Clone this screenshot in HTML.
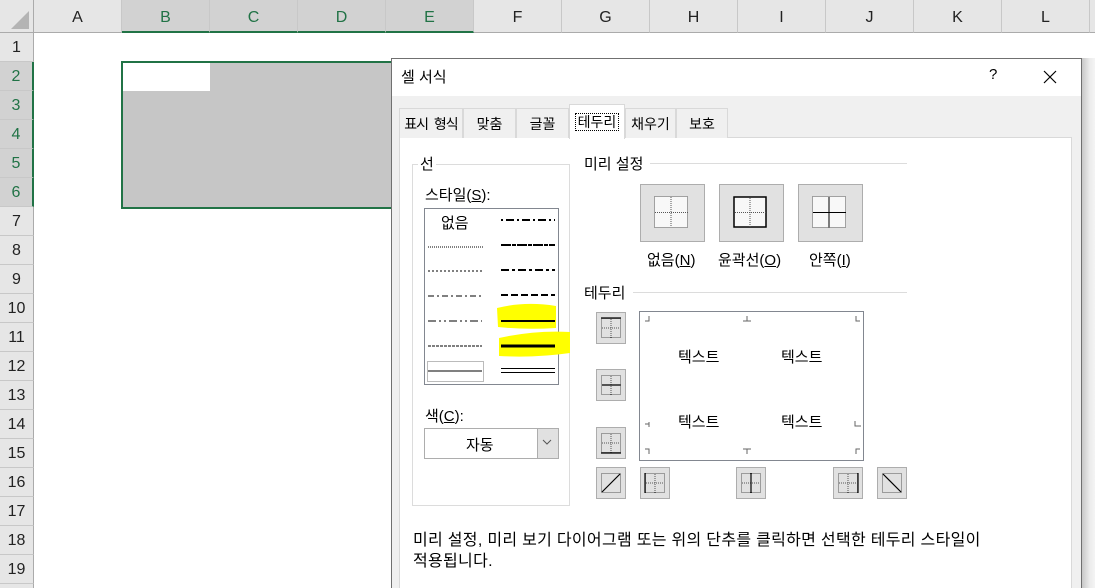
<!DOCTYPE html>
<html style="width:1095px;height:588px;overflow:hidden"><head><meta charset="utf-8"><style>
*{margin:0;padding:0;box-sizing:border-box}
body{width:1095px;height:588px;overflow:hidden;background:#fff;position:relative;font-family:"Liberation Sans","Noto Sans CJK KR",sans-serif;}
.a{position:absolute}
.ch{position:absolute;top:0;height:33px;background:#e6e6e6;border-right:1px solid #c8c8c8;border-bottom:1px solid #ababab;text-align:center;line-height:36px;font-size:16px;color:#222}
.ch.s{background:#d2d2d2;color:#217346;border-bottom:2px solid #217346}
.rh{position:absolute;left:0;width:34px;height:29px;background:#e6e6e6;border-right:1px solid #ababab;border-bottom:1px solid #c8c8c8;text-align:center;line-height:30px;font-size:16px;color:#222}
.rh.s{background:#d2d2d2;color:#217346;border-right:2px solid #217346}
.k{font-size:15px;color:#000;white-space:nowrap}
.btn{position:absolute;background:#e1e1e1;border:1px solid #adadad}
.tab{position:absolute;top:108px;height:30px;background:#f0f0f0;border:1px solid #d9d9d9;border-bottom:none;font-size:14px;text-align:center;line-height:30px;white-space:nowrap}
.hl{position:absolute;height:1px;background:#dcdcdc}
</style></head><body>
<div class="a" style="left:0;top:0;width:34px;height:33px;background:#e6e6e6;border-right:1px solid #ababab;border-bottom:1px solid #ababab"></div>
<svg class="a" style="left:10px;top:10px" width="20" height="20"><polygon points="19,1 19,19 1,19" fill="#b4b4b4"/></svg>
<div class="ch" style="left:34px;width:88px">A</div>
<div class="ch s" style="left:122px;width:88px">B</div>
<div class="ch s" style="left:210px;width:88px">C</div>
<div class="ch s" style="left:298px;width:88px">D</div>
<div class="ch s" style="left:386px;width:88px">E</div>
<div class="ch" style="left:474px;width:88px">F</div>
<div class="ch" style="left:562px;width:88px">G</div>
<div class="ch" style="left:650px;width:88px">H</div>
<div class="ch" style="left:738px;width:88px">I</div>
<div class="ch" style="left:826px;width:88px">J</div>
<div class="ch" style="left:914px;width:88px">K</div>
<div class="ch" style="left:1002px;width:88px">L</div>
<div class="ch" style="left:1090px;width:20px"></div>
<div class="rh" style="top:33px">1</div>
<div class="rh s" style="top:62px">2</div>
<div class="rh s" style="top:91px">3</div>
<div class="rh s" style="top:120px">4</div>
<div class="rh s" style="top:149px">5</div>
<div class="rh s" style="top:178px">6</div>
<div class="rh" style="top:207px">7</div>
<div class="rh" style="top:236px">8</div>
<div class="rh" style="top:265px">9</div>
<div class="rh" style="top:294px">10</div>
<div class="rh" style="top:323px">11</div>
<div class="rh" style="top:352px">12</div>
<div class="rh" style="top:381px">13</div>
<div class="rh" style="top:410px">14</div>
<div class="rh" style="top:439px">15</div>
<div class="rh" style="top:468px">16</div>
<div class="rh" style="top:497px">17</div>
<div class="rh" style="top:526px">18</div>
<div class="rh" style="top:555px">19</div>
<div class="rh" style="top:584px">20</div>
<div class="a" style="left:121px;top:61px;width:280px;height:148px;border:2px solid #217346;background:#c6c6c6"></div>
<div class="a" style="left:123px;top:63px;width:87px;height:28px;background:#fff"></div>
<div class="a" style="left:1082px;top:58px;width:13px;height:530px;background:linear-gradient(90deg,#c8c8c8,#ececec 60%,#f4f4f4)"></div>
<div class="a" style="left:391px;top:58px;width:691px;height:540px;background:#f0f0f0;border:1px solid #707070"></div>
<div class="a" style="left:392px;top:59px;width:689px;height:37px;background:#fff"></div>
<div class="a k" style="left:401px;top:66px">셀 서식</div>
<div class="a k" style="left:989px;top:66px">?</div>
<svg class="a" style="left:1043px;top:70px" width="14" height="14"><path d="M1 1L13 13M13 1L1 13" stroke="#000" stroke-width="1.2"/></svg>
<div class="a" style="left:399px;top:137px;width:673px;height:460px;background:#fff;border:1px solid #d9d9d9"></div>
<div class="tab" style="left:399px;width:64px;letter-spacing:-1px;word-spacing:3px">표시 형식</div>
<div class="tab" style="left:463px;width:53px">맞춤</div>
<div class="tab" style="left:516px;width:53px">글꼴</div>
<div class="tab" style="left:569px;width:56px;top:104px;height:35px;background:#fff;line-height:34px"><span style="border:1px dotted #000;padding:0 2px">테두리</span></div>
<div class="tab" style="left:625px;width:51px">채우기</div>
<div class="tab" style="left:676px;width:52px">보호</div>
<div class="a" style="left:412px;top:164px;width:158px;height:342px;border:1px solid #dcdcdc"></div>
<div class="a k" style="left:418px;top:153px;background:#fff;padding:0 2px">선</div>
<div class="a k" style="left:425px;top:184px">스타일(<u>S</u>):</div>
<div class="a" style="left:424px;top:208px;width:135px;height:177px;border:1px solid #828790;background:#fff"></div>
<div class="a k" style="left:441px;top:212px">없음</div>
<svg class="a" style="left:490px;top:300px" width="90" height="65"><path d="M7 8 Q35 1 66 6 L66 28 Q35 30 8 27Z M9 38 Q45 30 80 32 L80 53 Q45 58 9 56Z" fill="#ffff00"/></svg>
<svg class="a" style="left:425px;top:209px" width="133" height="175">
<g stroke="#000" fill="none">
<line x1="3" y1="38" x2="58" y2="38" stroke-dasharray="1,1"/>
<line x1="3" y1="62" x2="57" y2="62" stroke-dasharray="2,2"/>
<line x1="3" y1="87" x2="57" y2="87" stroke-dasharray="6,3,2,3"/>
<line x1="3" y1="112" x2="57" y2="112" stroke-dasharray="8,3,2,3,2,3"/>
<line x1="3" y1="137" x2="57" y2="137" stroke-dasharray="3,1"/>
<rect x="2.5" y="152.5" width="56" height="20" stroke="#777" stroke-dasharray="1,1"/>
<line x1="3" y1="162" x2="57" y2="162"/>
<line x1="76" y1="11" x2="130" y2="11" stroke-width="2" stroke-dasharray="2,3,8,3"/>
<line x1="76" y1="36" x2="130" y2="36" stroke-width="2" stroke-dasharray="10,1,4,1"/>
<line x1="76" y1="61" x2="130" y2="61" stroke-width="2" stroke-dasharray="8,3,3,3"/>
<line x1="76" y1="86" x2="130" y2="86" stroke-width="2" stroke-dasharray="7,3"/>
<line x1="76" y1="112" x2="130" y2="112" stroke-width="2"/>
<line x1="76" y1="137" x2="130" y2="137" stroke-width="3"/>
<line x1="76" y1="159.5" x2="130" y2="159.5"/>
<line x1="76" y1="163.5" x2="130" y2="163.5"/>
</g></svg>
<div class="a k" style="left:425px;top:405px">색(<u>C</u>):</div>
<div class="a" style="left:424px;top:428px;width:135px;height:31px;border:1px solid #adadad;background:#fff"></div>
<div class="a k" style="left:466px;top:434px">자동</div>
<div class="a" style="left:537px;top:429px;width:21px;height:29px;background:#e1e1e1;border-left:1px solid #adadad"></div>
<svg class="a" style="left:542px;top:439px" width="10" height="7"><path d="M1 1L5 5L9 1" stroke="#555" fill="none"/></svg>
<div class="a k" style="left:584px;top:153px">미리 설정</div>
<div class="hl" style="left:650px;top:163px;width:257px"></div>
<div class="btn" style="left:640px;top:184px;width:65px;height:58px"></div>
<div class="btn" style="left:719px;top:184px;width:65px;height:58px"></div>
<div class="btn" style="left:798px;top:184px;width:65px;height:58px"></div>
<svg class="a" style="left:654px;top:196px" width="36" height="34"><g fill="#f8f8f8" stroke="#555" stroke-dasharray="1,1"><rect x="0.5" y="0.5" width="33" height="31"/><line x1="17" y1="1" x2="17" y2="32"/><line x1="1" y1="16.5" x2="34" y2="16.5"/></g></svg>
<svg class="a" style="left:733px;top:196px" width="36" height="34"><rect x="1" y="1" width="32" height="30" fill="#f8f8f8" stroke="#000" stroke-width="1.5"/><g stroke="#555" stroke-dasharray="1,1"><line x1="17" y1="2" x2="17" y2="31"/><line x1="2" y1="16.5" x2="33" y2="16.5"/></g></svg>
<svg class="a" style="left:812px;top:196px" width="36" height="34"><rect x="0.5" y="0.5" width="33" height="31" fill="#f8f8f8" stroke="#555" stroke-dasharray="1,1"/><g stroke="#000"><line x1="17" y1="1" x2="17" y2="32"/><line x1="1" y1="16.5" x2="34" y2="16.5"/></g></svg>
<div class="a k" style="left:647px;top:249px">없음(<u>N</u>)</div>
<div class="a k" style="left:718px;top:249px">윤곽선(<u>O</u>)</div>
<div class="a k" style="left:809px;top:249px">안쪽(<u>I</u>)</div>
<div class="a k" style="left:584px;top:282px">테두리</div>
<div class="hl" style="left:633px;top:292px;width:274px"></div>
<div class="a" style="left:639px;top:311px;width:225px;height:150px;border:1px solid #828790;background:#fff"></div>
<svg class="a" style="left:640px;top:312px" width="223" height="148"><g stroke="#666" fill="none">
<path d="M9 4V9H5M107 4V9M103 9H111M216 4V9H220M9 110V115M5 112H9M215 109V114H221M9 142V137H5M107 142V137M103 137H111M216 142V137H220"/></g></svg>
<div class="a k" style="left:678px;top:346px">텍스트</div>
<div class="a k" style="left:781px;top:346px">텍스트</div>
<div class="a k" style="left:678px;top:411px">텍스트</div>
<div class="a k" style="left:781px;top:411px">텍스트</div>
<div class="btn" style="left:596px;top:312px;width:30px;height:32px"></div>
<div class="btn" style="left:596px;top:369px;width:30px;height:32px"></div>
<div class="btn" style="left:596px;top:427px;width:30px;height:32px"></div>
<div class="btn" style="left:596px;top:467px;width:30px;height:32px"></div>
<div class="btn" style="left:640px;top:467px;width:30px;height:32px"></div>
<div class="btn" style="left:736px;top:467px;width:30px;height:32px"></div>
<div class="btn" style="left:833px;top:467px;width:30px;height:32px"></div>
<div class="btn" style="left:877px;top:467px;width:30px;height:32px"></div>
<svg class="a" style="left:0;top:0" width="1095" height="588"><g fill="none" stroke="#555" stroke-dasharray="1,1">
<rect x="601.5" y="318.5" width="19" height="19"/><path d="M611 319V338M602 328H621"/>
<rect x="601.5" y="375.5" width="19" height="19"/><path d="M611 376V395"/>
<rect x="601.5" y="433.5" width="19" height="19"/><path d="M611 434V453M602 443H621"/>
<rect x="601.5" y="473.5" width="19" height="19"/>
<rect x="645.5" y="473.5" width="19" height="19"/><path d="M655 474V493M646 483H665"/>
<rect x="741.5" y="473.5" width="19" height="19"/><path d="M742 483H761"/>
<rect x="838.5" y="473.5" width="19" height="19"/><path d="M848 474V493M839 483H858"/>
<rect x="882.5" y="473.5" width="19" height="19"/>
</g><g stroke="#000" stroke-width="1.2">
<path d="M601 318H621M602 385H621M601 453H621M602 492L620 474M645 473V493M751 473V493M858 473V493M883 474L901 492"/></g></svg>
<div class="a k" style="left:413px;top:526px;font-size:16px;letter-spacing:0.3px">미리 설정, 미리 보기 다이어그램 또는 위의 단추를 클릭하면 선택한 테두리 스타일이</div>
<div class="a k" style="left:413px;top:547px;font-size:16px;letter-spacing:0.3px">적용됩니다.</div>
</body></html>
